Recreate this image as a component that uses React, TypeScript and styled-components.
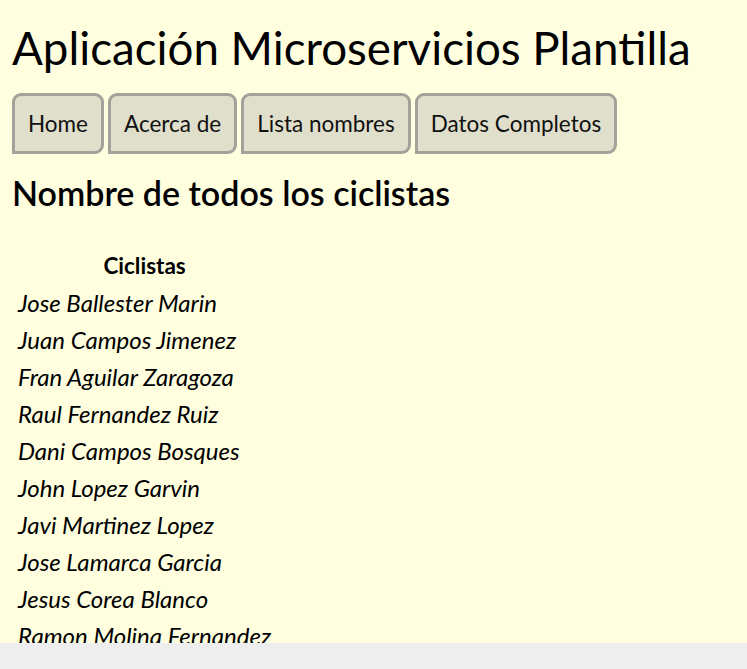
import React from "react";
import styled, { createGlobalStyle } from "styled-components";

const GlobalStyle = createGlobalStyle`
  html, body {
    margin: 0;
    padding: 0;
    background: #ffffe0;
  }
  body {
    font-family: Lato, "Noto Sans", sans-serif;
    color: #000;
  }
`;

const Page = styled.div`
  padding: 0 12px;
  min-height: 669px;
  box-sizing: border-box;
`;

const Title = styled.h1`
  margin: 0;
  padding-top: 22px;
  font-size: 45.7px;
  line-height: 52px;
  font-weight: 400;
`;

const Nav = styled.nav`
  display: flex;
  gap: 4px;
  margin-top: 19px;
`;

const NavButton = styled.button`
  box-sizing: border-box;
  height: 61px;
  padding: 0 13px;
  background: #e0dfcc;
  border: 3px solid #a2a29a;
  border-radius: 9px 9px 9px 0;
  font-family: Lato, "Noto Sans", sans-serif;
  font-size: 22.5px;
  color: #111;
  cursor: pointer;
`;

const Subtitle = styled.h2`
  margin: 18px 0 0;
  font-size: 34px;
  line-height: 42px;
  font-weight: 600;
`;

const Table = styled.table`
  margin-top: 33px;
  margin-left: 3px;
  border-collapse: collapse;
`;

const HeadCell = styled.th`
  font-size: 22.5px;
  font-weight: 700;
  line-height: 37px;
  padding: 0 3px;
  text-align: center;
`;

const Cell = styled.td`
  font-size: 24px;
  font-style: italic;
  line-height: 37px;
  padding: 0 3px;
  white-space: nowrap;
`;

const BottomBar = styled.div`
  position: fixed;
  left: 0;
  right: 0;
  bottom: 0;
  height: 26px;
  background: #eeeeee;
`;

const links = ["Home", "Acerca de", "Lista nombres", "Datos Completos"];

const ciclistas = [
  "Jose Ballester Marin",
  "Juan Campos Jimenez",
  "Fran Aguilar Zaragoza",
  "Raul Fernandez Ruiz",
  "Dani Campos Bosques",
  "John Lopez Garvin",
  "Javi Martinez Lopez",
  "Jose Lamarca Garcia",
  "Jesus Corea Blanco",
  "Ramon Molina Fernandez",
];

export default function App() {
  return (
    <>
      <GlobalStyle />
      <Page>
        <Title>Aplicación Microservicios Plantilla</Title>
        <Nav>
          {links.map((l) => (
            <NavButton key={l}>{l}</NavButton>
          ))}
        </Nav>
        <Subtitle>Nombre de todos los ciclistas</Subtitle>
        <Table>
          <thead>
            <tr>
              <HeadCell>Ciclistas</HeadCell>
            </tr>
          </thead>
          <tbody>
            {ciclistas.map((c) => (
              <tr key={c}>
                <Cell>{c}</Cell>
              </tr>
            ))}
          </tbody>
        </Table>
      </Page>
      <BottomBar />
    </>
  );
}
